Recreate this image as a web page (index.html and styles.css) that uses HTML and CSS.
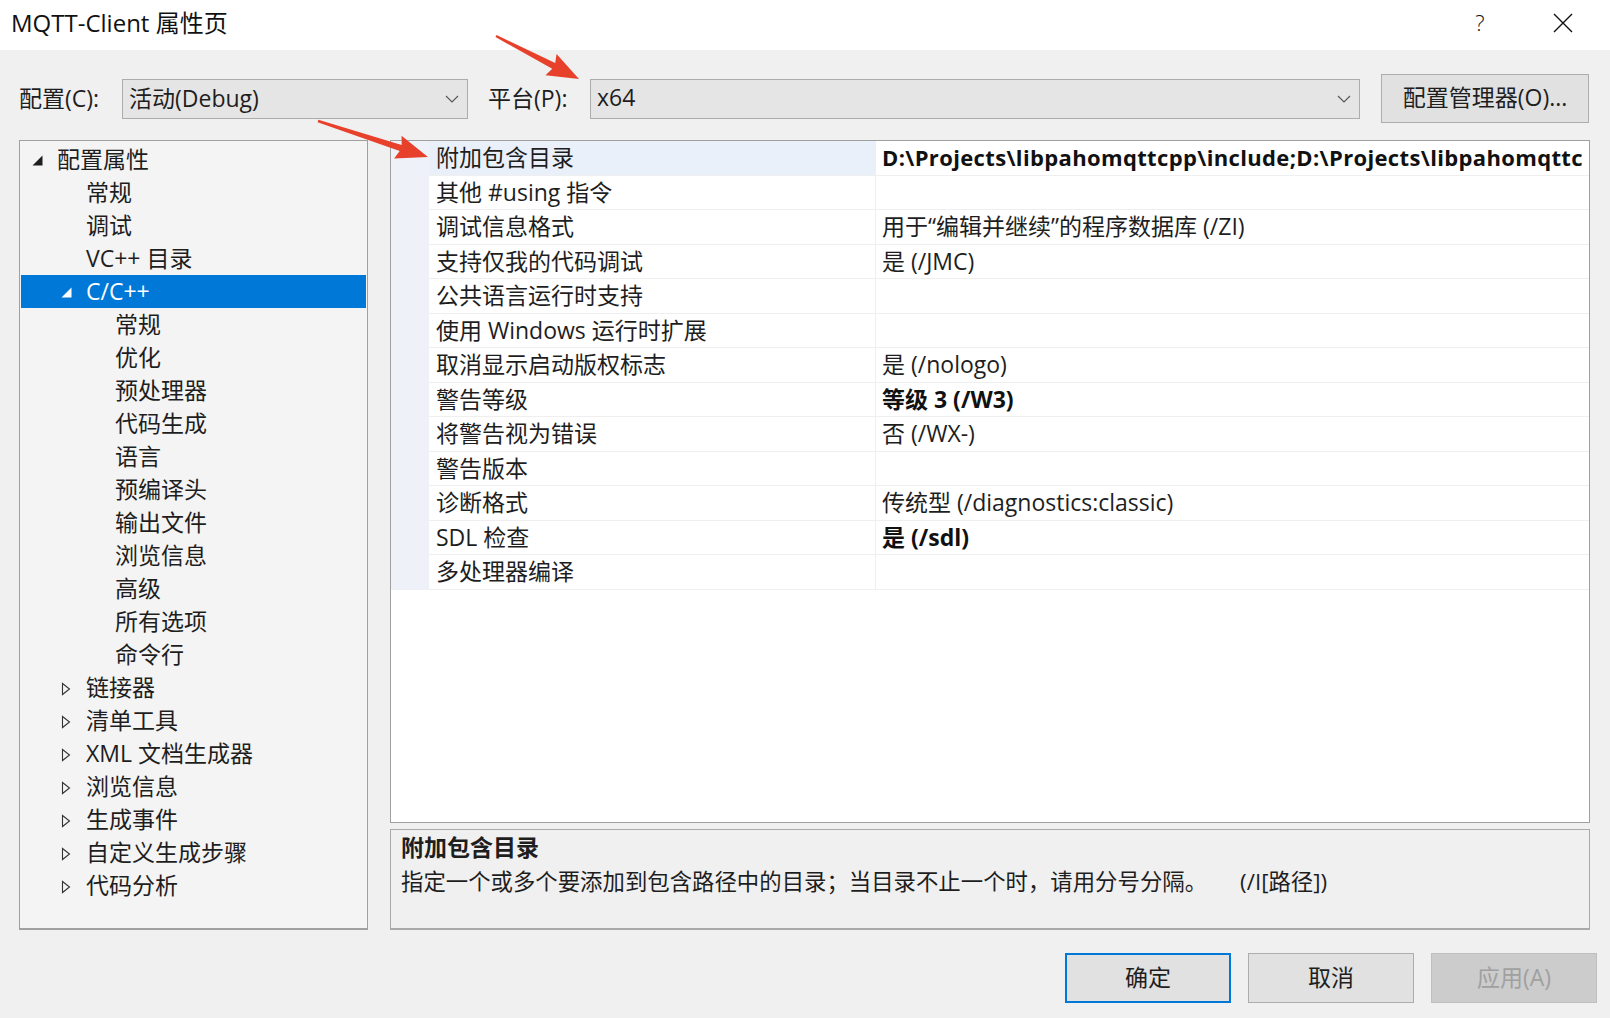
FILE: index.html
```html
<!DOCTYPE html>
<html lang="zh-CN">
<head>
  <meta charset="UTF-8" />
  <title>MQTT-Client 属性页</title>
  <link rel="stylesheet" href="styles.css">
</head>
<body>
  <div class="dialog">
    <div class="titlebar">
      <span class="title">MQTT-Client 属性页</span>
      <span class="help">?</span>
      <span class="close">
        <svg width="20" height="20" viewBox="0 0 20 20"><path d="M1 1 L19 19 M19 1 L1 19" stroke="#111" stroke-width="1.4" fill="none"/></svg>
      </span>
    </div>

    <div class="toolbar">
      <label class="lbl lbl-conf">配置(C):</label>
      <div class="combo combo-conf">
        <span>活动(Debug)</span>
        <svg class="chev" width="14" height="8" viewBox="0 0 14 8"><path d="M1 1 L7 7 L13 1" stroke="#555" stroke-width="1.1" fill="none"/></svg>
      </div>
      <label class="lbl lbl-plat">平台(P):</label>
      <div class="combo combo-plat">
        <span>x64</span>
        <svg class="chev" width="14" height="8" viewBox="0 0 14 8"><path d="M1 1 L7 7 L13 1" stroke="#555" stroke-width="1.1" fill="none"/></svg>
      </div>
      <button class="btn btn-manager">配置管理器(O)...</button>
    </div>

    <div class="main">
      <div class="tree">
        <div class="node l1"><span class="tw"><svg width="11" height="11" viewBox="0 0 11 11"><path d="M10.5 0.5 L10.5 10.5 L0.5 10.5 Z" fill="#1e1e1e"/></svg></span>配置属性</div>
        <div class="node l2"><span class="tw"></span>常规</div>
        <div class="node l2"><span class="tw"></span>调试</div>
        <div class="node l2"><span class="tw"></span>VC++ 目录</div>
        <div class="node l2 selected"><span class="tw"><svg width="11" height="11" viewBox="0 0 11 11"><path d="M10.5 0.5 L10.5 10.5 L0.5 10.5 Z" fill="#fff"/></svg></span>C/C++</div>
        <div class="node l3"><span class="tw"></span>常规</div>
        <div class="node l3"><span class="tw"></span>优化</div>
        <div class="node l3"><span class="tw"></span>预处理器</div>
        <div class="node l3"><span class="tw"></span>代码生成</div>
        <div class="node l3"><span class="tw"></span>语言</div>
        <div class="node l3"><span class="tw"></span>预编译头</div>
        <div class="node l3"><span class="tw"></span>输出文件</div>
        <div class="node l3"><span class="tw"></span>浏览信息</div>
        <div class="node l3"><span class="tw"></span>高级</div>
        <div class="node l3"><span class="tw"></span>所有选项</div>
        <div class="node l3"><span class="tw"></span>命令行</div>
        <div class="node l2"><span class="tw"><svg width="10" height="14" viewBox="0 0 10 14"><path d="M1.5 1.5 L8.5 7 L1.5 12.5 Z" fill="none" stroke="#333" stroke-width="1.1"/></svg></span>链接器</div>
        <div class="node l2"><span class="tw"><svg width="10" height="14" viewBox="0 0 10 14"><path d="M1.5 1.5 L8.5 7 L1.5 12.5 Z" fill="none" stroke="#333" stroke-width="1.1"/></svg></span>清单工具</div>
        <div class="node l2"><span class="tw"><svg width="10" height="14" viewBox="0 0 10 14"><path d="M1.5 1.5 L8.5 7 L1.5 12.5 Z" fill="none" stroke="#333" stroke-width="1.1"/></svg></span>XML 文档生成器</div>
        <div class="node l2"><span class="tw"><svg width="10" height="14" viewBox="0 0 10 14"><path d="M1.5 1.5 L8.5 7 L1.5 12.5 Z" fill="none" stroke="#333" stroke-width="1.1"/></svg></span>浏览信息</div>
        <div class="node l2"><span class="tw"><svg width="10" height="14" viewBox="0 0 10 14"><path d="M1.5 1.5 L8.5 7 L1.5 12.5 Z" fill="none" stroke="#333" stroke-width="1.1"/></svg></span>生成事件</div>
        <div class="node l2"><span class="tw"><svg width="10" height="14" viewBox="0 0 10 14"><path d="M1.5 1.5 L8.5 7 L1.5 12.5 Z" fill="none" stroke="#333" stroke-width="1.1"/></svg></span>自定义生成步骤</div>
        <div class="node l2"><span class="tw"><svg width="10" height="14" viewBox="0 0 10 14"><path d="M1.5 1.5 L8.5 7 L1.5 12.5 Z" fill="none" stroke="#333" stroke-width="1.1"/></svg></span>代码分析</div>
      </div>

      <div class="right">
        <div class="grid">
          <div class="prop active"><span class="gut"></span><span class="name">附加包含目录</span><span class="val bold path">D:\Projects\libpahomqttcpp\include;D:\Projects\libpahomqttc</span></div>
          <div class="prop"><span class="gut"></span><span class="name">其他 #using 指令</span><span class="val"></span></div>
          <div class="prop"><span class="gut"></span><span class="name">调试信息格式</span><span class="val">用于“编辑并继续”的程序数据库 (/ZI)</span></div>
          <div class="prop"><span class="gut"></span><span class="name">支持仅我的代码调试</span><span class="val">是 (/JMC)</span></div>
          <div class="prop"><span class="gut"></span><span class="name">公共语言运行时支持</span><span class="val"></span></div>
          <div class="prop"><span class="gut"></span><span class="name">使用 Windows 运行时扩展</span><span class="val"></span></div>
          <div class="prop"><span class="gut"></span><span class="name">取消显示启动版权标志</span><span class="val">是 (/nologo)</span></div>
          <div class="prop"><span class="gut"></span><span class="name">警告等级</span><span class="val bold">等级 3 (/W3)</span></div>
          <div class="prop"><span class="gut"></span><span class="name">将警告视为错误</span><span class="val">否 (/WX-)</span></div>
          <div class="prop"><span class="gut"></span><span class="name">警告版本</span><span class="val"></span></div>
          <div class="prop"><span class="gut"></span><span class="name">诊断格式</span><span class="val">传统型 (/diagnostics:classic)</span></div>
          <div class="prop"><span class="gut"></span><span class="name">SDL 检查</span><span class="val bold">是 (/sdl)</span></div>
          <div class="prop"><span class="gut"></span><span class="name">多处理器编译</span><span class="val"></span></div>
        </div>
        <div class="desc">
          <div class="desc-title">附加包含目录</div>
          <div class="desc-text">指定一个或多个要添加到包含路径中的目录；当目录不止一个时，请用分号分隔。<span class="switch">(/I[路径])</span></div>
        </div>
      </div>
    </div>

    <div class="actions">
      <button class="btn btn-ok">确定</button>
      <button class="btn">取消</button>
      <button class="btn btn-off">应用(A)</button>
    </div>

    <!-- red annotation arrows -->
    <svg class="marks" width="1610" height="1018" viewBox="0 0 1610 1018">
      <g fill="#e8412b">
        <path transform="translate(496 36) rotate(27.4)" d="M0 -1.2 L65 -3.2 L62 -12 L93.5 0 L62 12 L65 3.2 L0 1.2 Z"/>
        <path transform="translate(318 121) rotate(18.1)" d="M0 -1.2 L87 -3.2 L84 -12 L115.7 0 L84 12 L87 3.2 L0 1.2 Z"/>
      </g>
    </svg>
  </div>
</body>
</html>
```

FILE: styles.css
```css
* {
  box-sizing: border-box;
}

body {
  margin: 0;
  background-color: #f0f0f0;
  color: #1e1e1e;
  font-family: 'Open Sans', 'Noto Sans CJK SC', sans-serif;
  font-size: 23px;
}

.dialog {
  position: relative;
  width: 1610px;
  height: 1018px;
  overflow: hidden;
}

/* title bar */
.titlebar {
  height: 50px;
  display: flex;
  align-items: center;
  background-color: #fff;
  padding-left: 11px;
  padding-right: 24px;
}

.title {
  flex: 1;
  font-size: 24px;
  color: #111;
  padding-bottom: 8px;
}

.help {
  width: 40px;
  text-align: center;
  font-size: 22px;
  font-weight: 300;
  color: #111;
  padding-bottom: 6px;
}

.close {
  width: 46px;
  margin-left: 40px;
  display: flex;
  justify-content: center;
  padding-bottom: 4px;
}

/* config row */
.toolbar {
  margin-top: 24px;
  height: 49px;
  display: flex;
  align-items: center;
  padding-left: 19px;
}

.lbl {
  padding-bottom: 4px;
}

.lbl-conf {
  width: 103px;
}

.lbl-plat {
  width: 102px;
  margin-left: 20px;
}

.combo {
  height: 40px;
  display: flex;
  align-items: center;
  justify-content: space-between;
  padding: 0 8px 0 6px;
  background-color: #e5e5e5;
  border: 1px solid #acacac;
}

.combo span {
  padding-bottom: 4px;
}

.combo-conf {
  width: 346px;
}

.combo-plat {
  width: 770px;
}

.btn {
  height: 50px;
  width: 166px;
  background-color: #e1e1e1;
  border: 1px solid #adadad;
  font-family: inherit;
  font-size: 23px;
  color: #1e1e1e;
  padding: 0 0 5px 0;
}

.btn-manager {
  width: 208px;
  height: 49px;
  margin-left: 21px;
}

/* tree + grid */
.main {
  margin-top: 17px;
  height: 790px;
  display: flex;
  padding-left: 19px;
}

.tree {
  width: 349px;
  background-color: #f4f4f4;
  border: 1px solid #a0a0a0;
  border-bottom-width: 2px;
  padding: 2px 1px;
}

.node {
  height: 33px;
  line-height: 31px;
  display: flex;
  align-items: center;
  white-space: nowrap;
}

.node.l1 { padding-left: 11px; }
.node.l2 { padding-left: 40px; }
.node.l3 { padding-left: 69px; }

.node .tw {
  width: 25px;
  height: 33px;
  display: flex;
  align-items: center;
  padding-top: 2px;
}

.node.selected {
  background-color: #0078d7;
  color: #fff;
}

.right {
  width: 1200px;
  margin-left: 22px;
  display: flex;
  flex-direction: column;
}

.grid {
  height: 683px;
  background-color: #fff;
  border: 1px solid #a0a0a0;
  overflow: hidden;
}

.prop {
  height: 34.5px;
  display: flex;
}

.prop .gut {
  width: 38px;
  background-color: #eef1f8;
}

.prop .name {
  width: 446px;
  padding-left: 7px;
  line-height: 33px;
  border-bottom: 1px solid #efefef;
  white-space: nowrap;
}

.prop .val {
  flex: 1;
  padding-left: 6px;
  line-height: 33px;
  border-left: 1px solid #efefef;
  border-bottom: 1px solid #efefef;
  white-space: nowrap;
  overflow: hidden;
}

.prop.active .name {
  background-color: #eaf0fa;
}

.val.bold {
  font-weight: bold;
  color: #111;
}

.val.path {
  font-size: 22px;
  letter-spacing: 0.35px;
}

.desc {
  margin-top: 6px;
  height: 101px;
  border: 1px solid #a9a9a9;
  border-bottom-width: 2px;
  padding: 3px 0 0 10px;
  background-color: #f0f0f0;
}

.desc-title {
  line-height: 28px;
  font-weight: bold;
}

.desc-text {
  margin-top: 7px;
  line-height: 28px;
  font-size: 22.4px;
  white-space: nowrap;
}

.switch {
  margin-left: 33px;
}

/* bottom buttons */
.actions {
  margin-top: 23px;
  display: flex;
  justify-content: flex-end;
  gap: 17px;
  padding-right: 13px;
}

.btn-ok {
  border: 2px solid #0078d7;
}

.btn-off {
  background-color: #cccccc;
  border-color: #bfbfbf;
  color: #a0a0a0;
}

.marks {
  position: absolute;
  top: 0;
  left: 0;
  pointer-events: none;
}
```
